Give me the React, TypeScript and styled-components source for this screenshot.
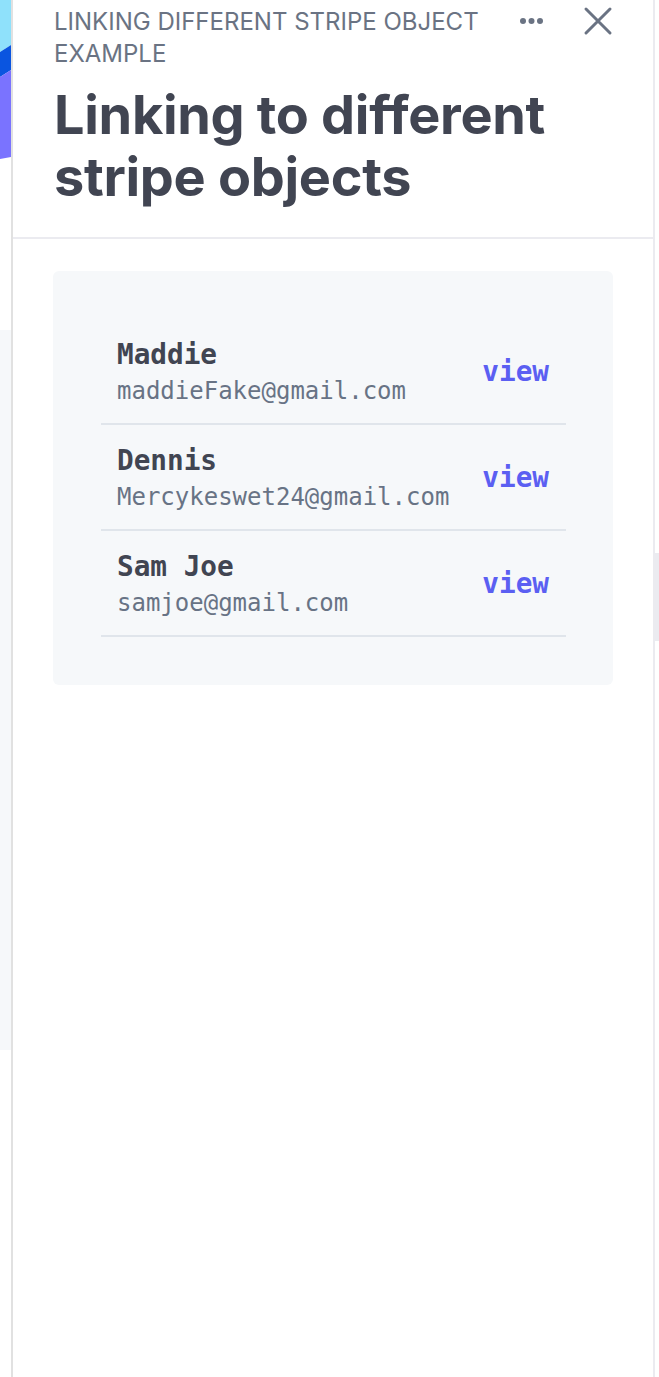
import React from "react";
import styled, { createGlobalStyle } from "styled-components";

const GlobalStyle = createGlobalStyle`
  html, body { margin: 0; padding: 0; background: #ffffff; }
  body { font-family: Inter, "Noto Sans", sans-serif; -webkit-font-smoothing: antialiased; }
  * { box-sizing: border-box; }
`;

const Page = styled.div`
  display: flex;
  width: 659px;
  height: 1377px;
  overflow: hidden;
  background: #ffffff;
`;

const Backdrop = styled.div`
  flex: 0 0 11px;
  display: flex;
  flex-direction: column;
`;

const BackdropGraphic = styled.svg`
  display: block;
  width: 11px;
  height: 170px;
`;

const BackdropBand = styled.div<{ $top: number; $height: number }>`
  margin-top: ${(p) => p.$top}px;
  height: ${(p) => p.$height}px;
  background: #f6f8fa;
`;

const Panel = styled.div`
  flex: 0 0 644px;
  display: flex;
  flex-direction: column;
  border-left: 2px solid #e1e1e1;
  border-right: 2px solid #ebebf0;
  background: #ffffff;
`;

const Header = styled.header`
  padding: 6px 40px 29px 41px;
  border-bottom: 2px solid #ebebf0;
  display: flex;
  flex-direction: column;
  gap: 14px;
`;

const HeaderTop = styled.div`
  display: flex;
  align-items: flex-start;
  gap: 20px;
`;

const Eyebrow = styled.div`
  flex: 1;
  font-family: Inter, sans-serif;
  font-size: 24px;
  line-height: 32px;
  color: #6a7383;
  text-transform: uppercase;
`;

const Actions = styled.div`
  display: flex;
  align-items: center;
  gap: 38px;
`;

const IconButton = styled.button`
  border: 0;
  background: transparent;
  padding: 0;
  display: flex;
  align-items: center;
  justify-content: center;
  color: #6a7383;
  cursor: pointer;
`;

const Title = styled.h1`
  margin: 0;
  font-family: Inter, sans-serif;
  font-weight: 700;
  font-size: 54px;
  line-height: 62px;
  color: #414552;
  letter-spacing: -0.3px;
`;

const Body = styled.main`
  padding: 32px 40px;
`;

const Card = styled.section`
  background: #f6f8fa;
  border-radius: 6px;
  padding: 48px 47px 48px 48px;
`;

const List = styled.ul`
  list-style: none;
  margin: 0;
  padding: 0;
`;

const Row = styled.li`
  display: flex;
  align-items: center;
  justify-content: space-between;
  padding: 18px 17px 14px 16px;
  border-bottom: 2px solid #e0e5eb;
`;

const Info = styled.div`
  display: flex;
  flex-direction: column;
`;

const Name = styled.div`
  font-family: "DejaVu Sans Mono", "Liberation Mono", monospace;
  font-weight: 700;
  font-size: 27.7px;
  line-height: 36px;
  color: #414552;
`;

const Email = styled.div`
  font-family: "DejaVu Sans Mono", "Liberation Mono", monospace;
  font-size: 24px;
  line-height: 36px;
  color: #687385;
`;

const ViewLink = styled.a`
  font-family: "DejaVu Sans Mono", "Liberation Mono", monospace;
  font-weight: 700;
  font-size: 27.7px;
  line-height: 36px;
  color: #5b5ff2;
  text-decoration: none;
  margin-top: -2px;
`;

const customers = [
  { name: "Maddie", email: "maddieFake@gmail.com" },
  { name: "Dennis", email: "Mercykeswet24@gmail.com" },
  { name: "Sam Joe", email: "samjoe@gmail.com" },
];

const RightEdge = styled.div`
  flex: 1;
  display: flex;
  flex-direction: column;
`;

const Scroll = styled.div`
  margin-top: 553px;
  height: 88px;
  background: #ebebf0;
`;

export default function App() {
  return (
    <>
      <GlobalStyle />
      <Page>
        <Backdrop>
          <BackdropGraphic viewBox="0 0 11 170" preserveAspectRatio="none">
            <rect x="0" y="0" width="11" height="170" fill="#ffffff" />
            <polygon points="0,0 11,0 11,45 0,52" fill="#8fe1fb" />
            <polygon points="0,52 11,45 11,70 0,77" fill="#0a55e0" />
            <polygon points="0,77 11,70 11,157 0,159" fill="#7a73ff" />
          </BackdropGraphic>
          <BackdropBand $top={160} $height={720} />
        </Backdrop>
        <Panel>
          <Header>
            <HeaderTop>
              <Eyebrow>Linking different stripe object example</Eyebrow>
              <Actions>
                <IconButton aria-label="More">
                  <svg width="26" height="8" viewBox="0 0 26 8">
                    <circle cx="4" cy="4" r="3" fill="#6a7383" />
                    <circle cx="12.5" cy="4" r="3" fill="#6a7383" />
                    <circle cx="21" cy="4" r="3" fill="#6a7383" />
                  </svg>
                </IconButton>
                <IconButton aria-label="Close">
                  <svg width="30" height="30" viewBox="0 0 30 30">
                    <path
                      d="M3 3 L27 27 M27 3 L3 27"
                      stroke="#6a7383"
                      strokeWidth="3"
                      strokeLinecap="round"
                      fill="none"
                    />
                  </svg>
                </IconButton>
              </Actions>
            </HeaderTop>
            <Title>Linking to different stripe objects</Title>
          </Header>
          <Body>
            <Card>
              <List>
                {customers.map((c) => (
                  <Row key={c.email}>
                    <Info>
                      <Name>{c.name}</Name>
                      <Email>{c.email}</Email>
                    </Info>
                    <ViewLink href="#">view</ViewLink>
                  </Row>
                ))}
              </List>
            </Card>
          </Body>
        </Panel>
        <RightEdge>
          <Scroll />
        </RightEdge>
      </Page>
    </>
  );
}
